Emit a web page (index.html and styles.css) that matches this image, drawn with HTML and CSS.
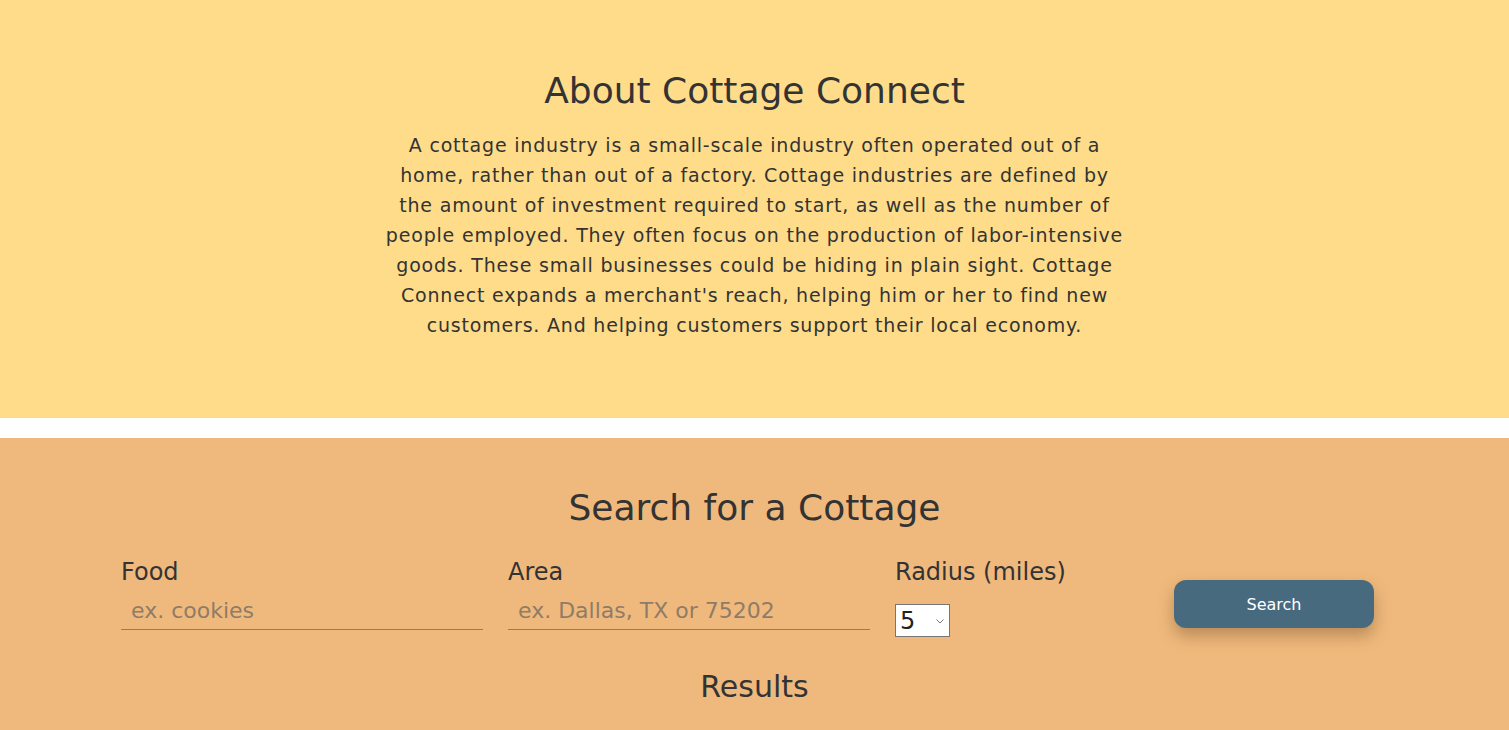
FILE: index.html
```html
<!DOCTYPE html>
<html lang="en">
<head>
<meta charset="utf-8">
<title>Cottage Connect</title>
<link rel="stylesheet" href="styles.css">
</head>
<body>
<section class="about">
  <h1 class="about-title">About Cottage Connect</h1>
  <p class="about-text">A cottage industry is a small-scale industry often operated out of a<br>
  home, rather than out of a factory. Cottage industries are defined by<br>
  the amount of investment required to start, as well as the number of<br>
  people employed. They often focus on the production of labor-intensive<br>
  goods. These small businesses could be hiding in plain sight. Cottage<br>
  Connect expands a merchant's reach, helping him or her to find new<br>
  customers. And helping customers support their local economy.</p>
</section>
<div class="spacer"></div>
<section class="search">
  <h2 class="search-title">Search for a Cottage</h2>
  <form class="search-form">
    <div class="field">
      <label class="field-label" for="food">Food</label>
      <input class="field-input" id="food" type="text" placeholder="ex. cookies">
    </div>
    <div class="field">
      <label class="field-label" for="area">Area</label>
      <input class="field-input" id="area" type="text" placeholder="ex. Dallas, TX or 75202">
    </div>
    <div class="field">
      <label class="field-label" for="radius">Radius (miles)</label>
      <div class="select-wrap">
        <select class="radius-select" id="radius">
          <option>5</option>
          <option>10</option>
          <option>25</option>
        </select>
        <svg class="select-arrow" width="8" height="5" viewBox="0 0 8 5"><path d="M0.5 0.5 L4 4 L7.5 0.5" fill="none" stroke="#777" stroke-width="1"/></svg>
      </div>
    </div>
    <div class="action">
      <button class="search-btn" type="button">Search</button>
    </div>
  </form>
  <h3 class="results-title">Results</h3>
</section>
</body>
</html>
```

FILE: styles.css
```css
* { box-sizing: border-box; }
html, body { margin: 0; padding: 0; }
body {
  font-family: "DejaVu Sans", "Open Sans", sans-serif;
  color: #333;
  background: #fff;
}
.about {
  background: #fedc8a;
  height: 418px;
  padding-top: 67px;
  text-align: center;
}
.about-title {
  margin: 0;
  font-size: 36px;
  font-weight: 400;
  line-height: 48px;
}
.about-text {
  margin: 15px auto 0;
  width: 840px;
  font-size: 19px;
  letter-spacing: 0.8px;
  line-height: 30px;
}
.spacer { height: 20px; }
.search {
  background: #efb97d;
  height: 292px;
  padding-top: 46px;
}
.search-title {
  margin: 0;
  text-align: center;
  font-size: 36px;
  font-weight: 400;
  line-height: 48px;
}
.search-form {
  width: 1267px;
  margin: 24px auto 0;
  display: grid;
  grid-template-columns: 362px 362px 1fr 228px;
  column-gap: 25px;
}
.field { display: flex; flex-direction: column; align-items: flex-start; }
.field-label {
  font-size: 24px;
  line-height: 32px;
}
.field-input {
  width: 100%;
  margin-top: 8px;
  border: 0;
  border-bottom: 1px solid #8b7e70;
  background: transparent;
  font-family: inherit;
  font-size: 22px;
  line-height: 30px;
  padding: 0 10px 3px;
  color: #333;
  outline: none;
}
.field-input::placeholder { color: #8f7c66; }
.select-wrap { position: relative; margin-top: 16px; }
.radius-select {
  appearance: none;
  -webkit-appearance: none;
  width: 55px;
  height: 33px;
  border: 1px solid #767676;
  background: #fff;
  font-family: inherit;
  font-size: 24px;
  color: #222;
  padding: 0 0 0 4px;
  border-radius: 0;
}
.select-arrow { position: absolute; right: 6px; top: 15px; pointer-events: none; }
.action { display: flex; justify-content: center; padding-top: 24px; }
.search-btn {
  width: 200px;
  height: 48px;
  border: 0;
  border-radius: 12px;
  background: #476a7e;
  color: #fff;
  font-family: inherit;
  font-size: 16px;
  box-shadow: 0 8px 16px rgba(90, 55, 20, 0.35);
}
.results-title {
  margin: 30px 0 0;
  text-align: center;
  font-size: 30px;
  font-weight: 400;
  line-height: 40px;
}
```
